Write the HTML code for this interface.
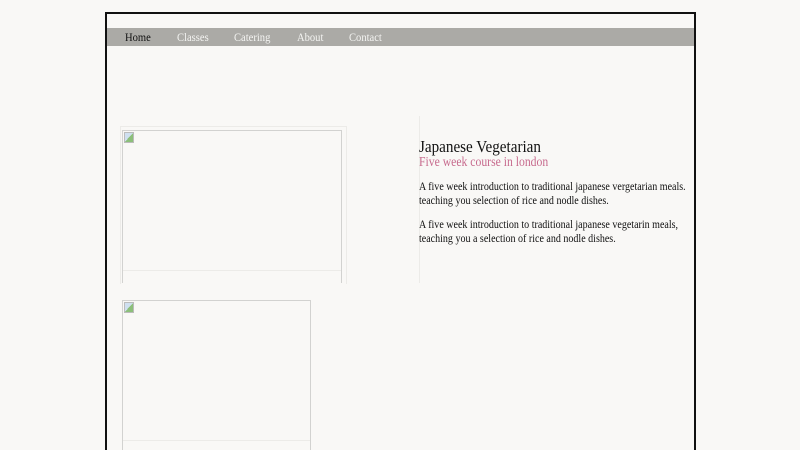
<!DOCTYPE html>
<html><head><style>
html,body{margin:0;padding:0;background:#f9f8f6;width:800px;height:450px;overflow:hidden;font-family:"Liberation Serif",serif;}
.c{position:absolute;left:105px;top:12px;width:587px;height:436px;overflow:hidden;border:2px solid #111;border-bottom:none;background:#f9f8f6;}
.nav{position:absolute;left:0;top:14px;width:587px;height:18px;background:#abaaa6;}
.nav span{position:absolute;top:2px;font-size:12px;color:#f4f4f2;transform:scaleX(0.88);transform-origin:left;}
.img{position:absolute;border:1px solid #d2d2d0;box-sizing:border-box;}
.frame{position:absolute;border:1px solid #ecebe8;}
.ic{position:absolute;left:1px;top:1px;width:10px;height:11px;background:linear-gradient(135deg,#cfe0f0 50%,#8cbf7a 50%);border:1px solid #bbb;box-sizing:border-box;}
.t{position:absolute;left:312px;color:#111;transform:scaleX(0.89);transform-origin:left;white-space:nowrap;}
p{margin:0}
</style></head><body>
<div class="c">
<div class="nav">
<span style="left:18px;color:#111">Home</span>
<span style="left:70px">Classes</span>
<span style="left:127px">Catering</span>
<span style="left:190px">About</span>
<span style="left:242px">Contact</span>
</div>
<div class="frame" style="left:13px;top:112px;width:225px;height:157px;border-bottom:none"></div>
<div class="img" style="left:15px;top:116px;width:220px;height:153px;border-bottom:none"><div class="ic"></div></div>
<div style="position:absolute;left:16px;top:256px;width:218px;height:1px;background:#ecebe8"></div>
<div style="position:absolute;left:312px;top:102px;width:1px;height:167px;background:#ecebe8"></div>
<div class="img" style="left:15px;top:286px;width:189px;height:170px;border-bottom:none"><div class="ic"></div></div>
<div style="position:absolute;left:16px;top:426px;width:187px;height:1px;background:#ecebe8"></div>
<div class="t" style="top:123px;font-size:17px;">Japanese Vegetarian</div>
<div class="t" style="top:141px;font-size:14px;color:#c76a8d;transform:scaleX(0.835);">Five week course in london</div>
<div class="t" style="top:166px;font-size:12px;line-height:13.5px;transform:scaleX(0.835);">
<p>A five week introduction to traditional japanese vergetarian meals.<br>teaching you selection of rice and nodle dishes.</p>
<p style="margin-top:11px">A five week introduction to traditional japanese vegetarin meals,<br>teaching you a selection of rice and nodle dishes.</p>
</div>
</div>
</body></html>
